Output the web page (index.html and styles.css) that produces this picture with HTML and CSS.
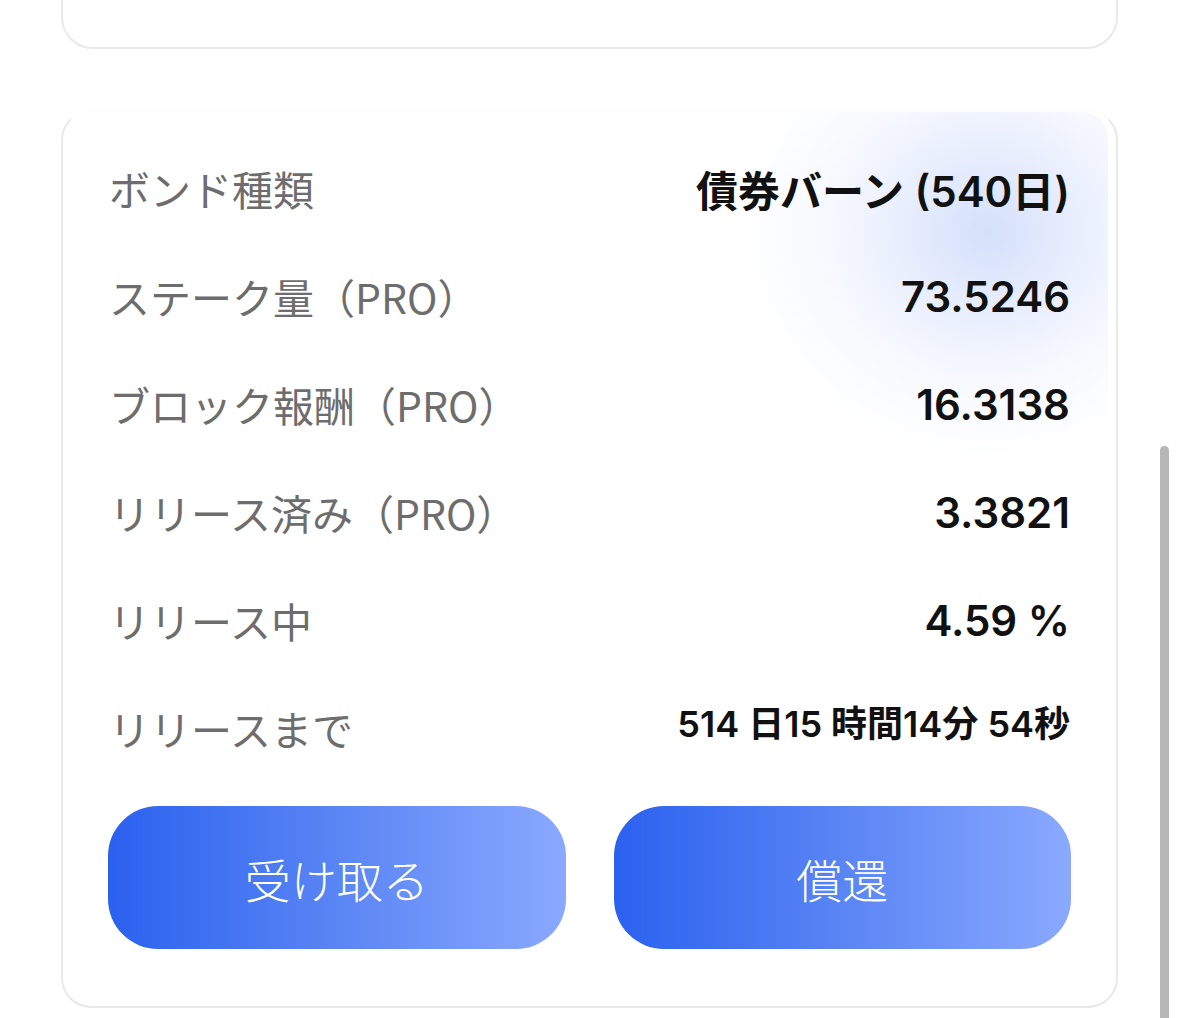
FILE: index.html
```html
<!DOCTYPE html>
<html lang="ja">
<head>
  <meta charset="UTF-8" />
  <meta name="viewport" content="width=device-width, initial-scale=1.0" />
  <title>ボンド詳細</title>
  <link rel="stylesheet" href="styles.css">
</head>
<body>

  <div class="card card-top"></div>

  <div class="card bond">
    <div class="glow"></div>

    <div class="row">
      <span class="label">ボンド種類</span>
      <span class="value">債券バーン (540日)</span>
    </div>
    <div class="row">
      <span class="label">ステーク量（PRO）</span>
      <span class="value">73.5246</span>
    </div>
    <div class="row">
      <span class="label">ブロック報酬（PRO）</span>
      <span class="value">16.3138</span>
    </div>
    <div class="row">
      <span class="label">リリース済み（PRO）</span>
      <span class="value">3.3821</span>
    </div>
    <div class="row">
      <span class="label">リリース中</span>
      <span class="value">4.59 %</span>
    </div>
    <div class="row">
      <span class="label">リリースまで</span>
      <span class="value small">514 日15 時間14分 54秒</span>
    </div>

    <div class="actions">
      <button class="btn">受け取る</button>
      <button class="btn">償還</button>
    </div>
  </div>

  <div class="scrollbar"></div>

</body>
</html>
```

FILE: styles.css
```css
* {
  box-sizing: border-box;
}

body {
  margin: 0;
  padding: 0 61px;
  background: #fff;
  font-family: "Noto Sans CJK JP", sans-serif;
  height: 1018px;
  overflow: hidden;
  position: relative;
}

.card {
  background: #fff;
  border: 2px solid #e9e9e9;
  border-radius: 32px;
}

.card-top {
  margin-top: -40px;
  height: 89px;
}

.bond {
  position: relative;
  overflow: hidden;
  margin-top: 61px;
  padding: 22px 45px 57px 45px;
  border-top-color: #fdfdfd;
  border-radius: 30px;
}

.glow {
  position: absolute;
  top: 0;
  right: 8px;
  width: 460px;
  height: 380px;
  border-top-right-radius: 26px;
  background: radial-gradient(ellipse 250px 230px at 340px 120px, rgba(210, 222, 250, 0.95) 0%, rgba(224, 232, 252, 0.75) 35%, rgba(238, 242, 254, 0.45) 65%, rgba(255, 255, 255, 0) 100%);
}

.row {
  position: relative;
  display: flex;
  justify-content: space-between;
  align-items: center;
  height: 108px;
  padding: 0 1px 0 1px;
}

.label {
  font-size: 41px;
  color: #6d6d6d;
}

.value {
  font-family: Inter, "Noto Sans CJK JP", sans-serif;
  font-weight: 600;
  font-size: 42px;
  color: #111;
}

.value.small {
  font-size: 36px;
  margin-bottom: 14px;
}

.actions {
  display: flex;
  gap: 48px;
  margin-top: 24px;
}

.btn {
  flex: 1;
  height: 143px;
  border: none;
  border-radius: 50px;
  background: linear-gradient(90deg, #2a61ef 0%, #5a85f4 50%, #8aa9ff 100%);
  color: #fff;
  font-family: "Noto Sans CJK JP", sans-serif;
  font-size: 46px;
  font-weight: 300;
  cursor: pointer;
}

.scrollbar {
  position: absolute;
  top: 446px;
  right: 10px;
  width: 9px;
  height: 600px;
  border-radius: 5px;
  background: #b7b7b7;
}
```
